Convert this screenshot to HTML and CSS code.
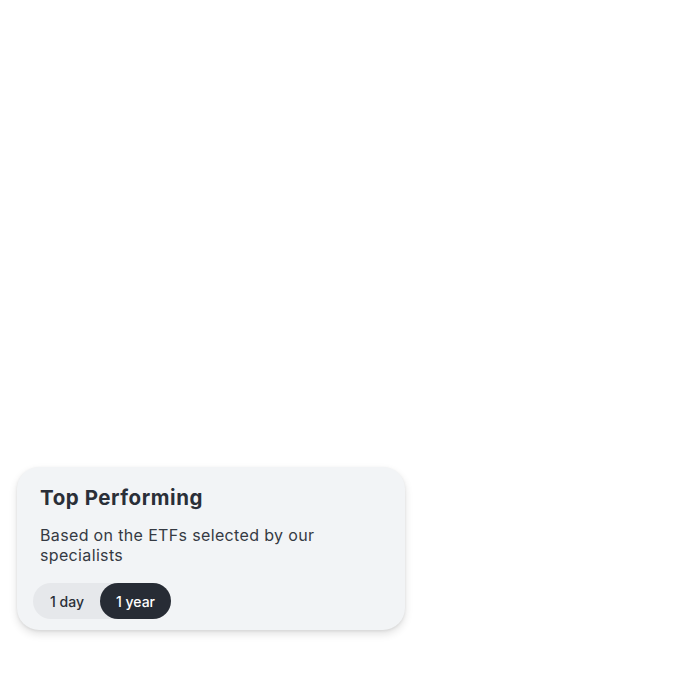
FILE: index.html
```html
<!DOCTYPE html>
<html>
<head>
<meta charset="utf-8">
<link rel="stylesheet" href="styles.css">
</head>
<body>
<div class="page">
  <div class="card">
    <h2 class="title">Top Performing</h2>
    <p class="subtitle">Based on the ETFs selected by our specialists</p>
    <div class="toggle">
      <span class="opt">1 day</span>
      <span class="opt active">1 year</span>
    </div>
  </div>
</div>
</body>
</html>
```
FILE: styles.css
```css
html, body { margin: 0; padding: 0; background: #fff; }
body { font-family: Inter, "Noto Sans", sans-serif; color: #272c35; }
.page {
  height: 690px;
  box-sizing: border-box;
  display: flex;
  flex-direction: column;
  justify-content: flex-end;
  padding: 0 0 60px 17px;
}
.card {
  width: 388px;
  box-sizing: border-box;
  background: #f2f4f6;
  border-radius: 22px;
  padding: 18px 24px 11px 23px;
  box-shadow: 0 4px 8px rgba(0,0,0,0.12), 0 1px 3px rgba(0,0,0,0.08);
}
.title {
  margin: 0;
  font-size: 20.5px;
  line-height: 26px;
  font-weight: 700;
  color: #2a2f38;
  letter-spacing: 0.55px;
}
.subtitle {
  margin: 14px 0 0 0;
  font-size: 16px;
  line-height: 20px;
  color: #353a43;
  width: 290px;
  letter-spacing: 0.35px;
}
.toggle {
  display: inline-flex;
  margin: 18px 0 0 -7px;
  background: #e6e8eb;
  border-radius: 18px;
  height: 36px;
}
.opt {
  display: flex;
  align-items: center;
  padding: 0 16px;
  font-size: 14px;
  font-weight: 500;
  color: #2a2f38;
  border-radius: 18px;
}
.opt:first-child { padding-left: 17px; }
.active { background: #272c35; color: #fff; }
```
